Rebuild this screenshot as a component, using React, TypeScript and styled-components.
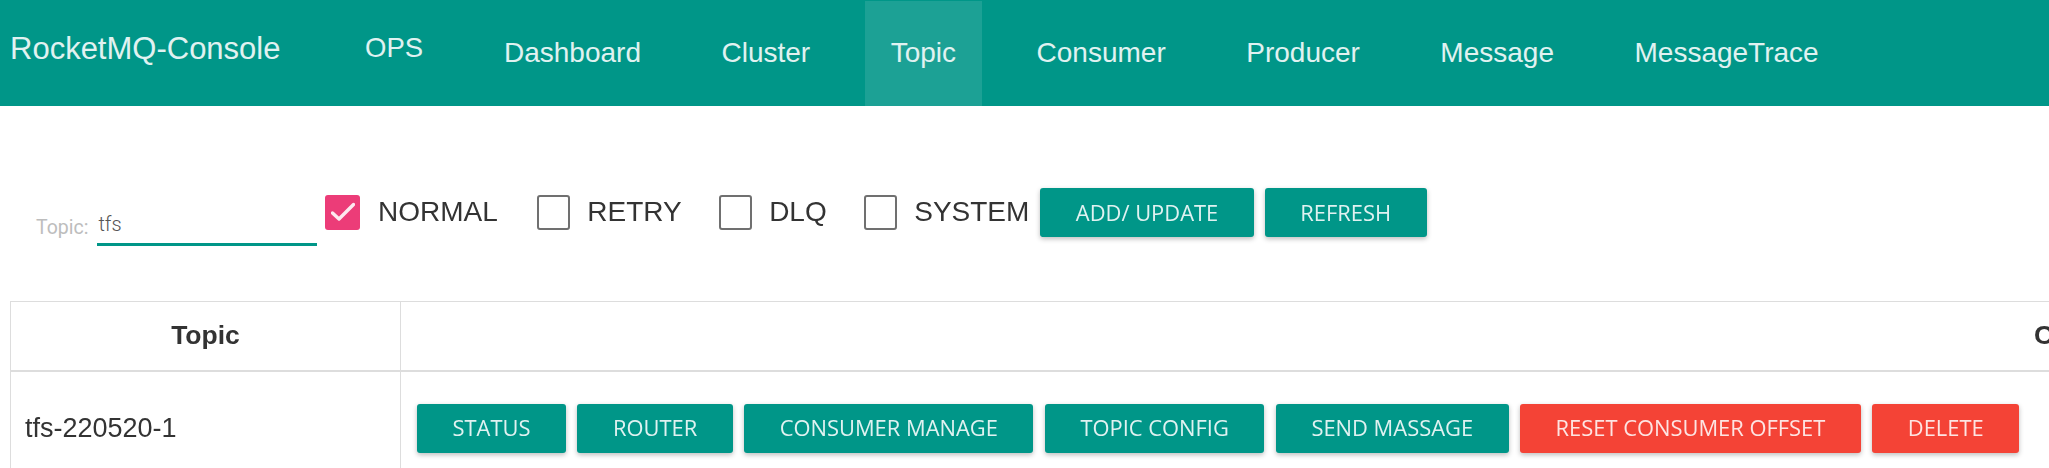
import React from "react";
import styled, { createGlobalStyle } from "styled-components";

const Global = createGlobalStyle`
  html, body { margin: 0; padding: 0; overflow: hidden; background: #fff; }
  body { font-family: "Liberation Sans", Arial, sans-serif; color: #333; }
  * { box-sizing: border-box; }
`;

const Nav = styled.nav`
  display: flex;
  align-items: flex-start;
  height: 106px;
  background: #009688;
  color: #e0f2f1;
  font-family: "Liberation Sans", Arial, sans-serif;
`;

const Brand = styled.div`
  flex: 0 0 365px;
  padding: 33px 0 0 10px;
  font-size: 31px;
  line-height: 1;
  white-space: nowrap;
`;

const Ops = styled.div`
  flex: 0 0 113px;
  padding-top: 34px;
  font-size: 27.5px;
  line-height: 1;
`;

const NavList = styled.ul`
  display: flex;
  gap: 28.5px;
  margin: 0;
  padding: 0;
  list-style: none;
`;

const NavItem = styled.li<{ $active?: boolean }>`
  margin-top: 1px;
  height: 105px;
  padding: 38px 26px 0;
  font-size: 28px;
  line-height: 1;
  white-space: nowrap;
  background: ${(p) => (p.$active ? "rgba(255,255,255,0.11)" : "transparent")};
`;

const Toolbar = styled.div`
  display: flex;
  align-items: flex-start;
  height: 58px;
  margin-top: 82px;
  padding-left: 36px;
`;

const Field = styled.div`
  align-self: flex-end;
  display: flex;
  align-items: flex-end;
  margin-right: 8px;
`;

const FieldLabel = styled.label`
  font-family: Roboto, "Liberation Sans", sans-serif;
  font-size: 19.5px;
  color: #bdbdbd;
  line-height: 1;
  padding-bottom: 9px;
  margin-right: 9px;
`;

const TextInput = styled.input`
  width: 220px;
  height: 36px;
  border: none;
  border-bottom: 3px solid #009688;
  padding: 0 0 6px 1px;
  outline: none;
  font-family: Roboto, "Liberation Sans", sans-serif;
  font-weight: 300;
  font-size: 20px;
  color: #555;
  background: transparent;
  caret-color: #333;
`;

const CheckLabel = styled.label<{ $gap: number }>`
  display: flex;
  align-items: center;
  height: 36px;
  margin-top: 6px;
  margin-right: ${(p) => p.$gap}px;
  font-size: 28px;
  line-height: 1;
  color: #333;
  white-space: nowrap;
`;

const Box = styled.span<{ $checked?: boolean }>`
  display: inline-flex;
  align-items: center;
  justify-content: center;
  width: ${(p) => (p.$checked ? 35 : 33)}px;
  height: 35px;
  margin-right: 17.5px;
  border-radius: 3px;
  border: ${(p) => (p.$checked ? "none" : "2.5px solid #707070")};
  background: ${(p) => (p.$checked ? "#ec3c78" : "#fff")};
`;

const Btn = styled.button<{ $danger?: boolean }>`
  min-width: 143px;
  height: 49px;
  padding: 0 35.5px;
  border: none;
  border-radius: 3px;
  background: ${(p) => (p.$danger ? "#f44336" : "#009688")};
  color: ${(p) => (p.$danger ? "#fde4e2" : "#e0f2f1")};
  font-family: "Open Sans", sans-serif;
  font-size: 21.9px;
  line-height: 1;
  white-space: nowrap;
  box-shadow: 0 2px 5px 0 rgba(0, 0, 0, 0.26);
  cursor: pointer;
`;

const ToolBtns = styled.div`
  display: flex;
  gap: 11px;
`;

const Table = styled.table`
  margin: 55px 0 0 10px;
  width: 3783px;
  border-collapse: collapse;
  font-family: "Liberation Sans", Arial, sans-serif;
  line-height: 1.42857;
`;

const Th = styled.th<{ $w?: number }>`
  width: ${(p) => (p.$w ? `${p.$w}px` : "auto")};
  height: 69px;
  padding: 0 8px;
  border: 1px solid #ddd;
  border-bottom: 2px solid #ddd;
  font-size: 26.5px;
  font-weight: bold;
  text-align: center;
  vertical-align: middle;
  color: #333;
`;

const Td = styled.td<{ $pl?: number }>`
  padding: 32px 16px 32px ${(p) => p.$pl ?? 16}px;
  border: 1px solid #ddd;
  font-size: 27px;
  vertical-align: middle;
  color: #333;
`;

const Actions = styled.div`
  display: flex;
  gap: 11.5px;
`;

const Check = () => (
  <svg width="24" height="20" viewBox="0 0 24 20" aria-hidden>
    <polyline points="1.5,11 8,17 22.5,2.5" fill="none" stroke="#fde8ef" strokeWidth="3.4" strokeLinecap="round" strokeLinejoin="round" />
  </svg>
);

const navItems = ["Dashboard", "Cluster", "Topic", "Consumer", "Producer", "Message", "MessageTrace"];
const checks = [
  { name: "NORMAL", checked: true, gap: 39 },
  { name: "RETRY", checked: false, gap: 37 },
  { name: "DLQ", checked: false, gap: 37 },
  { name: "SYSTEM", checked: false, gap: 11 },
];
const actions = [
  { t: "STATUS" },
  { t: "ROUTER" },
  { t: "CONSUMER MANAGE" },
  { t: "TOPIC CONFIG" },
  { t: "SEND MASSAGE" },
  { t: "RESET CONSUMER OFFSET", d: true },
  { t: "DELETE", d: true },
];

export default function App() {
  return (
    <>
      <Global />
      <Nav>
        <Brand>RocketMQ-Console</Brand>
        <Ops>OPS</Ops>
        <NavList>
          {navItems.map((n) => (
            <NavItem key={n} $active={n === "Topic"}>
              {n}
            </NavItem>
          ))}
        </NavList>
      </Nav>
      <Toolbar>
        <Field>
          <FieldLabel>Topic:</FieldLabel>
          <TextInput defaultValue="tfs" autoFocus />
        </Field>
        {checks.map((c) => (
          <CheckLabel key={c.name} $gap={c.gap}>
            <Box $checked={c.checked}>{c.checked && <Check />}</Box>
            {c.name}
          </CheckLabel>
        ))}
        <ToolBtns>
          <Btn>ADD/ UPDATE</Btn>
          <Btn>REFRESH</Btn>
        </ToolBtns>
      </Toolbar>
      <Table>
        <thead>
          <tr>
            <Th $w={390}>Topic</Th>
            <Th>Operation</Th>
          </tr>
        </thead>
        <tbody>
          <tr>
            <Td $pl={14}>tfs-220520-1</Td>
            <Td>
              <Actions>
                {actions.map((a) => (
                  <Btn key={a.t} $danger={a.d}>
                    {a.t}
                  </Btn>
                ))}
              </Actions>
            </Td>
          </tr>
        </tbody>
      </Table>
    </>
  );
}
